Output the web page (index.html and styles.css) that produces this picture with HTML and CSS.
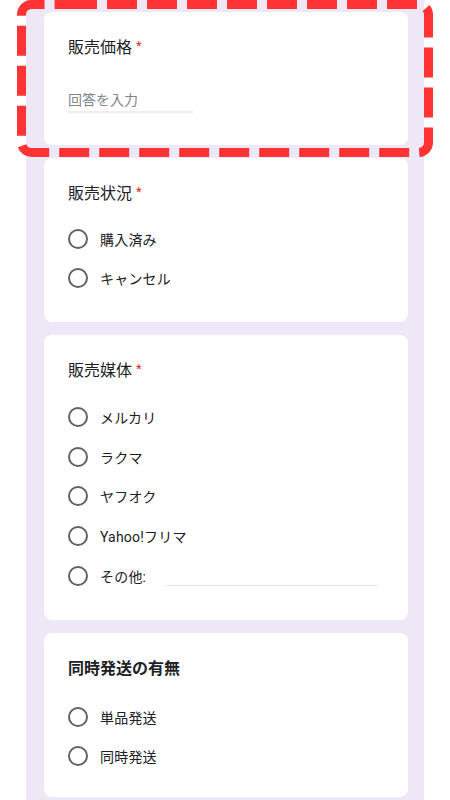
FILE: index.html
```html
<!DOCTYPE html>
<html lang="ja">
<head>
<meta charset="utf-8">
<title>フォーム</title>
<link rel="stylesheet" href="styles.css">
</head>
<body>
<div class="page">
  <section class="card card-text">
    <div class="q-title">販売価格<span class="req">*</span></div>
    <div class="text-input">回答を入力</div>
  </section>

  <section class="card">
    <div class="q-title">販売状況<span class="req">*</span></div>
    <ul class="options">
      <li class="option"><span class="radio"></span><span class="label">購入済み</span></li>
      <li class="option"><span class="radio"></span><span class="label">キャンセル</span></li>
    </ul>
  </section>

  <section class="card">
    <div class="q-title">販売媒体<span class="req">*</span></div>
    <ul class="options options-long">
      <li class="option option-loose"><span class="radio"></span><span class="label">メルカリ</span></li>
      <li class="option option-loose"><span class="radio"></span><span class="label">ラクマ</span></li>
      <li class="option option-loose"><span class="radio"></span><span class="label">ヤフオク</span></li>
      <li class="option option-loose"><span class="radio"></span><span class="label">Yahoo!フリマ</span></li>
      <li class="option option-loose"><span class="radio"></span><span class="label">その他:</span><span class="other-line"></span></li>
    </ul>
  </section>

  <section class="card card-last">
    <div class="q-title q-bold">同時発送の有無</div>
    <ul class="options options-wide">
      <li class="option option-tight"><span class="radio"></span><span class="label">単品発送</span></li>
      <li class="option option-tight"><span class="radio"></span><span class="label">同時発送</span></li>
    </ul>
  </section>
</div>

<svg class="highlight" width="450" height="162" viewBox="0 0 450 162" aria-hidden="true">
  <path d="M67 4.5 H418.5 A10 10 0 0 1 428.5 14.5 V142.5 A10 10 0 0 1 418.5 152.5 H31.5 A10 10 0 0 1 21.5 142.5 V14.5 A10 10 0 0 1 31.5 4.5 H67 Z" fill="none" stroke="#ff3333" stroke-width="9" stroke-dasharray="30 10"/>
</svg>
</body>
</html>
```

FILE: styles.css
```css
html, body {
  margin: 0;
  padding: 0;
  background: #ffffff;
}

body {
  position: relative;
  width: 450px;
  height: 800px;
  overflow: hidden;
  font-family: "Roboto", "Noto Sans CJK JP", sans-serif;
  color: #202124;
}

.page {
  margin-left: 26px;
  width: 398px;
  min-height: 800px;
  box-sizing: border-box;
  background: #ede7f6;
  padding: 12px 16px 0 18px;
  display: flex;
  flex-direction: column;
  gap: 13px;
}

.card {
  background: #ffffff;
  border-radius: 8px;
  padding: 24px 24px 24px 24px;
}

.card-text {
  padding-bottom: 32px;
}

.card-last {
  padding-bottom: 22px;
}

.q-title {
  font-size: 16px;
  line-height: 24px;
  font-weight: 400;
  letter-spacing: 0;
  color: #202124;
}

.q-bold {
  font-weight: 700;
}

.req {
  color: #d93025;
  font-size: 13px;
  vertical-align: top;
  line-height: 20px;
  padding-left: 4px;
}

.text-input {
  margin-top: 24px;
  width: 125px;
  padding-top: 5px;
  font-size: 14px;
  line-height: 22px;
  height: 22px;
  color: #80868b;
  border-bottom: 2px solid #eeeeee;
}

.options {
  list-style: none;
  margin: 13px 0 0 0;
  padding: 0;
}

.options-long {
  margin-top: 14px;
}

.options-wide {
  margin-top: 17px;
}

.option {
  display: flex;
  align-items: center;
  height: 39.5px;
  font-size: 14px;
}

.option-loose {
  height: 39.75px;
}

.option-tight {
  height: 38.5px;
}

.radio {
  width: 20px;
  height: 20px;
  box-sizing: border-box;
  border: 2px solid #5f6368;
  border-radius: 50%;
  margin-right: 12px;
  flex: none;
}

.label {
  color: #202124;
  letter-spacing: 0.2px;
}

.other-line {
  margin-left: 18px;
  margin-top: 20px;
  width: 214px;
  height: 1px;
  background: #e8e8e8;
}

.highlight {
  position: absolute;
  left: 0;
  top: 0;
  pointer-events: none;
}
```
